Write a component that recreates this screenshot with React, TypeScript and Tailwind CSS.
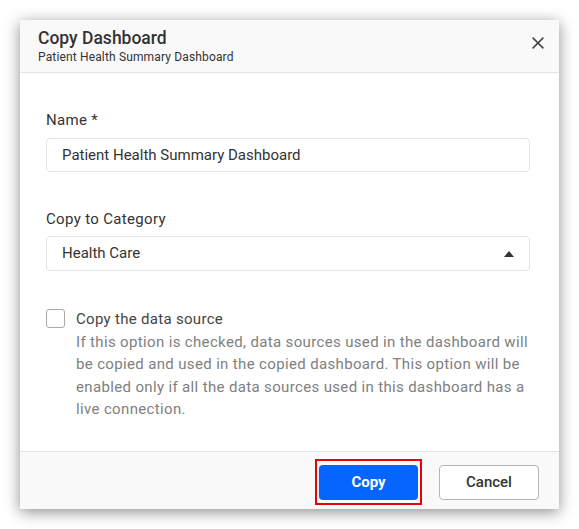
export default function App() {
  return (
    <div className="h-[529px] w-full bg-white p-[20px]" style={{ fontFamily: 'Roboto, "Noto Sans", sans-serif' }}>
      <div className="flex h-[489px] w-[539px] flex-col bg-white shadow-[0_3px_14px_rgba(0,0,0,0.45)]">
        {/* Header */}
        <div className="relative flex h-[53px] flex-col justify-center border-b border-[#e3e3e3] bg-[#f9f9f9] px-[18px]">
          <div className="text-[17.5px] font-medium leading-[22px] text-[#333]">Copy Dashboard</div>
          <div className="text-[12px] leading-[16px] tracking-[0.15px] text-[#333]">Patient Health Summary Dashboard</div>
          <button className="absolute right-[15px] top-[17px] text-[#444]">
            <svg width="12" height="12" viewBox="0 0 12 12">
              <path d="M0.6 0.6 L11.4 11.4 M11.4 0.6 L0.6 11.4" stroke="currentColor" strokeWidth="1.5" fill="none" />
            </svg>
          </button>
        </div>

        {/* Body */}
        <div className="flex-1 pl-[26px] pr-[29px] pt-[37px]">
          <label className="block text-[15px] leading-[20px] tracking-[0.3px] text-[#333]">Name *</label>
          <div className="mt-[8px] flex h-[34px] items-center rounded-[4px] border border-[#e3e3e3] px-[15px] text-[15px] text-[#333]">
            Patient Health Summary Dashboard
          </div>

          <label className="mt-[37px] block text-[15px] leading-[20px] tracking-[0.33px] text-[#333]">Copy to Category</label>
          <div className="mt-[7px] flex h-[35px] items-center justify-between rounded-[4px] border border-[#e3e3e3] pl-[15px] pr-[15px] text-[15px] text-[#333]">
            <span>Health Care</span>
            <svg width="10" height="6" viewBox="0 0 10 6" className="text-[#333]">
              <path d="M0 6 L5 0 L10 6 Z" fill="currentColor" />
            </svg>
          </div>

          <div className="mt-[37px] flex gap-[11px]">
            <div className="mt-[1px] h-[19px] w-[19px] shrink-0 rounded-[3px] border border-[#a8a8a8] bg-white" />
            <div>
              <div className="text-[15px] leading-[22.5px] tracking-[0.3px] text-[#444]">Copy the data source</div>
              <p className="text-[15px] leading-[22.5px] tracking-[0.35px] text-[#808080]">
                If this option is checked, data sources used in the dashboard will be copied and used in the copied
                dashboard. This option will be enabled only if all the data sources used in this dashboard has a live
                connection.
              </p>
            </div>
          </div>
        </div>

        {/* Footer */}
        <div className="flex h-[58px] items-start justify-end gap-[21px] border-t border-[#e3e3e3] bg-[#f9f9f9] pr-[20px] pt-[13px]">
          <button className="relative h-[35px] w-[99px] rounded-[4px] bg-[#0565ff] text-[15px] font-bold text-white">
            Copy
            <span className="pointer-events-none absolute -bottom-[5px] -left-[4px] -right-[4px] -top-[6px] border-2 border-[#e8000b]" />
          </button>
          <button className="h-[35px] w-[100px] rounded-[4px] border border-[#b5b5b5] bg-white text-[15px] font-medium text-[#333]">
            Cancel
          </button>
        </div>
      </div>
    </div>
  );
}
